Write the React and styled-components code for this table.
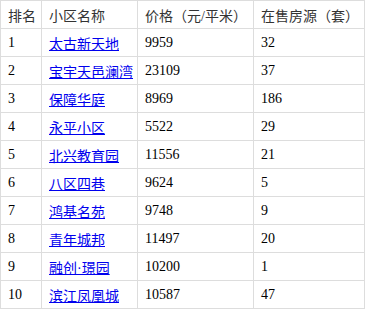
import React from "react";
import styled, { createGlobalStyle } from "styled-components";

const rows = [
  [1, "太古新天地", 9959, 32],
  [2, "宝宇天邑澜湾", 23109, 37],
  [3, "保障华庭", 8969, 186],
  [4, "永平小区", 5522, 29],
  [5, "北兴教育园", 11556, 21],
  [6, "八区四巷", 9624, 5],
  [7, "鸿基名苑", 9748, 9],
  [8, "青年城邦", 11497, 20],
  [9, "融创·璟园", 10200, 1],
  [10, "滨江凤凰城", 10587, 47],
];

export default function App() {
  return (
    <>
      <GlobalStyle />
      <Table>
        <colgroup>
          <col style={{ width: 41 }} />
          <col style={{ width: 96 }} />
          <col style={{ width: 116 }} />
          <col />
        </colgroup>
        <thead>
          <tr>
            <Th>排名</Th>
            <Th>小区名称</Th>
            <Th>价格（元/平米）</Th>
            <Th>在售房源（套）</Th>
          </tr>
        </thead>
        <tbody>
          {rows.map(([rank, name, price, count]) => (
            <tr key={rank}>
              <Td>{rank}</Td>
              <Td>
                <Link href="#">{name}</Link>
              </Td>
              <Td>{price}</Td>
              <Td>{count}</Td>
            </tr>
          ))}
        </tbody>
      </Table>
    </>
  );
}

const GlobalStyle = createGlobalStyle`
  body {
    margin: 0;
    background: #fff;
    font-family: "Liberation Serif", "Noto Sans CJK SC", serif;
  }
`;

const Table = styled.table`
  width: 365px;
  border-collapse: collapse;
  table-layout: fixed;
  font-size: 14px;
  border: 1px solid #dddddd;
`;

const Th = styled.th`
  height: 27px;
  padding: 0 0 0 7px;
  border: 1px solid #dddddd;
  text-align: left;
  font-weight: normal;
  color: #333;
  white-space: nowrap;
`;

const Td = styled.td`
  height: 27px;
  padding: 0 0 0 7px;
  border: 1px solid #dddddd;
  color: #000;
  white-space: nowrap;
`;

const Link = styled.a`
  color: #0000ee;
  text-decoration: underline;
`;
